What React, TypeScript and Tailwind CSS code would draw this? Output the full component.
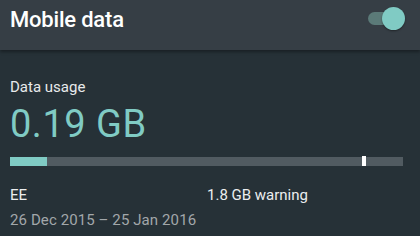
export default function App() {
  return (
    <div className="w-[420px] h-[236px] overflow-hidden bg-[#263137] font-['Roboto',sans-serif]">
      {/* Header */}
      <div className="h-[50px] bg-[#363e45] flex items-start justify-between pl-[10px] pr-[20px] pt-[9px] shadow-[0_2px_3px_rgba(0,0,0,0.35)] relative z-10">
        <span className="text-white text-[22px] font-medium tracking-[-0.2px] leading-none">Mobile data</span>
        <div className="relative w-[32px] h-[13px] mt-[3px] rounded-full bg-[#5b7a78]">
          <div className="absolute -right-[5px] -top-[5px] w-[23px] h-[23px] rounded-full bg-[#80cbc4] shadow-[0_1px_2px_rgba(0,0,0,0.4)]" />
        </div>
      </div>

      {/* Body */}
      <div className="px-[10px] pt-[28px]">
        <div className="text-[#e8eaeb] text-[15px] leading-[18px]">Data usage</div>
        <div className="text-[#80cbc4] text-[38px] leading-[44px] mt-[6px] tracking-[0.5px]">0.19 GB</div>
        <div className="relative h-[9px] bg-[#515b61] mt-[11px] w-[393px] flex">
          <div className="w-[37px] h-full bg-[#80cbc4]" />
          <div className="absolute left-[352px] -top-[1px] w-[4px] h-[10px] bg-white" />
        </div>
        <div className="flex mt-[20px] text-[15px] leading-[18px] text-[#eceeef]">
          <span className="w-[197px]">EE</span>
          <span>1.8 GB warning</span>
        </div>
        <div className="text-[#a2a7aa] text-[15px] leading-[18px] mt-[7px] tracking-[0.1px]">26 Dec 2015 – 25 Jan 2016</div>
      </div>
    </div>
  );
}
